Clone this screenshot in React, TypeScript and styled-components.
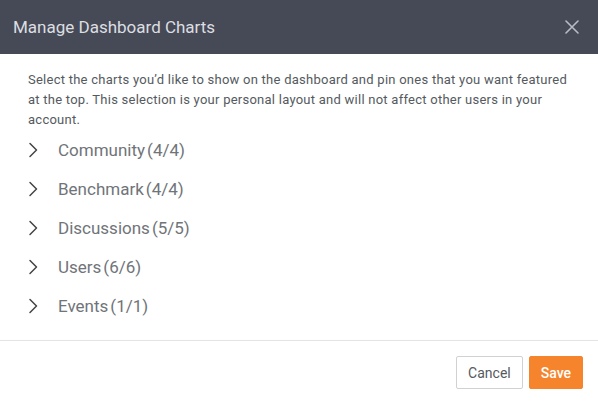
import styled, { createGlobalStyle } from 'styled-components'

const GlobalStyle = createGlobalStyle`
  html, body {
    margin: 0;
    padding: 0;
    background: #ffffff;
  }
  body {
    font-family: Roboto, "Noto Sans", sans-serif;
  }
`

const groups = [
  { name: 'Community', count: '4/4' },
  { name: 'Benchmark', count: '4/4' },
  { name: 'Discussions', count: '5/5' },
  { name: 'Users', count: '6/6' },
  { name: 'Events', count: '1/1' },
]

const Chevron = () => (
  <svg width="10" height="16" viewBox="0 0 10 16" fill="none">
    <path d="M2 1.5L8.5 8L2 14.5" stroke="#444" strokeWidth="1.5" strokeLinecap="round" strokeLinejoin="round" />
  </svg>
)

const CloseIcon = () => (
  <svg width="14" height="14" viewBox="0 0 14 14" fill="none">
    <path d="M1 1L13 13M13 1L1 13" stroke="#b9bcc4" strokeWidth="1.6" strokeLinecap="round" />
  </svg>
)

const App = () => {
  return (
    <>
      <GlobalStyle />
      <Modal>
        <Header>
          <Title>Manage Dashboard Charts</Title>
          <CloseBtn aria-label="Close">
            <CloseIcon />
          </CloseBtn>
        </Header>
        <Body>
          <Intro>
            Select the charts you’d like to show on the dashboard and pin ones that you want featured
            <br />
            at the top. This selection is your personal layout and will not affect other users in your
            <br />
            account.
          </Intro>
          <GroupList>
            {groups.map((g) => (
              <GroupRow key={g.name}>
                <ChevronWrap>
                  <Chevron />
                </ChevronWrap>
                <GroupLabel>
                  {g.name}
                  <Count>({g.count})</Count>
                </GroupLabel>
              </GroupRow>
            ))}
          </GroupList>
        </Body>
        <Footer>
          <Button>Cancel</Button>
          <Button primary>Save</Button>
        </Footer>
      </Modal>
    </>
  )
}
export default App

const Modal = styled.div`
  width: 598px;
  height: 404px;
  display: flex;
  flex-direction: column;
  background: #fff;
`
const Header = styled.header`
  height: 54px;
  flex-shrink: 0;
  background: #464a56;
  display: flex;
  align-items: center;
  justify-content: space-between;
  padding: 0 19px 0 13px;
  box-sizing: border-box;
`
const Title = styled.h2`
  margin: 0;
  font-size: 17px;
  font-weight: 400;
  color: #dcdee2;
`
const CloseBtn = styled.button`
  border: 0;
  background: none;
  padding: 0;
  display: flex;
  cursor: pointer;
`
const Body = styled.div`
  flex: 1;
  padding: 16px 20px 0 28px;
  border-bottom: 1px solid #e3e3e3;
`
const Intro = styled.p`
  margin: 0;
  font-size: 13px;
  line-height: 20px;
  color: #555a60;
  letter-spacing: 0.25px;
  white-space: nowrap;
`
const GroupList = styled.ul`
  list-style: none;
  margin: 0;
  padding: 0;
`
const GroupRow = styled.li`
  height: 39px;
  display: flex;
  align-items: center;
`
const ChevronWrap = styled.span`
  width: 30px;
  display: flex;
  align-items: center;
`
const GroupLabel = styled.span`
  font-size: 17px;
  color: #707479;
`
const Count = styled.span`
  margin-left: 2px;
`
const Footer = styled.footer`
  height: 63px;
  flex-shrink: 0;
  display: flex;
  justify-content: flex-end;
  align-items: center;
  gap: 6px;
  padding: 0 15px 0 0;
  box-sizing: border-box;
`
const Button = styled.button<{ primary?: boolean }>`
  height: 33px;
  padding: 0 11px;
  font-family: Roboto, "Noto Sans", sans-serif;
  font-size: 14px;
  border-radius: 2px;
  cursor: pointer;
  color: ${(p) => (p.primary ? '#ffffff' : '#555a60')};
  background: ${(p) => (p.primary ? '#f5842c' : '#ffffff')};
  border: 1px solid ${(p) => (p.primary ? '#f5842c' : '#cfd1d4')};
  font-weight: ${(p) => (p.primary ? 500 : 400)};
`
